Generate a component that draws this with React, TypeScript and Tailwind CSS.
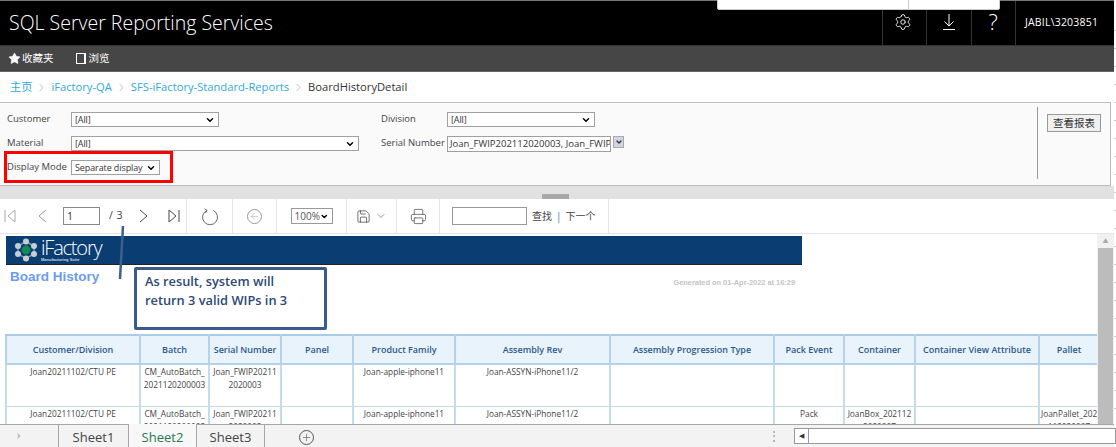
import { Settings, ChevronRight, Star, ChevronDown, ArrowLeft, Save, Printer, Plus } from 'lucide-react';

const sans = "font-['Open_Sans','Noto_Sans_CJK_SC',sans-serif]";

const columns = [
  { title: 'Customer/Division', width: 134 },
  { title: 'Batch', width: 69 },
  { title: 'Serial Number', width: 72 },
  { title: 'Panel', width: 72 },
  { title: 'Product Family', width: 102 },
  { title: 'Assembly Rev', width: 155 },
  { title: 'Assembly Progression Type', width: 164 },
  { title: 'Pack Event', width: 70 },
  { title: 'Container', width: 71 },
  { title: 'Container View Attribute', width: 124 },
  { title: 'Pallet', width: 60 },
];

const rows = [
  ['Joan20211102/CTU PE', 'CM_AutoBatch_ 2021120200003', 'Joan_FWIP20211 2020003', '', 'Joan-apple-iphone11', 'Joan-ASSYN-iPhone11/2', '', '', '', '', ''],
  ['Joan20211102/CTU PE', 'CM_AutoBatch_ 2021120200003', 'Joan_FWIP20211 2020003', '', 'Joan-apple-iphone11', 'Joan-ASSYN-iPhone11/2', '', 'Pack', 'JoanBox_202112 2020007', '', 'JoanPallet_202 112020007'],
];

function FakeSelect({ value, width }: { value: string; width: string }) {
  return (
    <div className={`${width} h-[15px] flex items-center justify-between bg-white border border-[#a0a0a0] pl-[3px] pr-[3px] text-[9px] tracking-[-0.1px] text-[#333] whitespace-nowrap`}>
      <span>{value}</span>
      <ChevronDown size={10} strokeWidth={3.5} className="text-black shrink-0" />
    </div>
  );
}

function Logo() {
  const dots = [[12, 3.5], [20, 8], [20, 16], [12, 20.5], [4, 16], [4, 8]];
  return (
    <svg width="24" height="24" viewBox="0 0 24 24">
      <polygon points="12,3.5 20,8 20,16 12,20.5 4,16 4,8" fill="none" stroke="#7f96ad" strokeWidth="1.5" />
      {dots.map(([x, y]) => <circle key={`${x}:${y}`} cx={x} cy={y} r="3" fill="#c6ced4" />)}
      <circle cx="12" cy="12" r="4.4" fill="#0f8a50" />
    </svg>
  );
}

function ToolDivider() {
  return <div className="w-px self-stretch bg-[#e6e6e6]" />;
}

export default function App() {
  return (
    <div className={`relative w-[1116px] h-[447px] overflow-hidden bg-white flex ${sans}`}>
      <div className="flex flex-col w-[1114px] h-full shrink-0">
        {/* Top bar */}
        <header className="h-[46px] shrink-0 bg-black border-t border-[#777] border-b-[#333] border-b flex items-stretch justify-between">
          <h1 className="pl-[9px] pt-[8px] text-[19.5px] leading-[28px] font-light text-white">SQL Server Reporting Services</h1>
          <div className="flex items-stretch text-white">
            <div className="w-[44.5px] border-l border-[#333] flex items-center justify-center pb-[3px] pr-[2px]"><Settings size={18} strokeWidth={1.2} /></div>
            <div className="w-[44.5px] border-l border-[#333] flex items-center justify-center pb-[3px]">
              <svg width="14" height="18" viewBox="0 0 14 18" fill="none" stroke="white" strokeWidth="1">
                <path d="M7 1v12M2.5 8.5 7 13l4.5-4.5M1 16.5h12" />
              </svg>
            </div>
            <div className="w-[44.5px] border-l border-[#333] flex items-center justify-center pb-[3px] text-[22px] font-light">?</div>
            <div className="w-[99px] border-l border-[#333] flex items-center pl-[9px] pb-[1px] text-[10.5px] tracking-[0.2px]">JABIL\3203851</div>
          </div>
        </header>

        {/* Nav bar */}
        <nav className="h-[26px] shrink-0 bg-[#464646] border-b border-[#666] flex items-center pl-[8px] text-[10.5px] text-white">
          <Star size={13} fill="white" strokeWidth={1} />
          <span className="ml-[1px]">收藏夹</span>
          <span className="ml-[22px] w-[10px] h-[11px] border border-white border-r-2" />
          <span className="ml-[3px]">浏览</span>
        </nav>

        {/* Breadcrumb */}
        <div className="h-[30px] shrink-0 flex items-center pl-[10px] text-[11.2px] text-[#30a9de]">
          <span>主页</span>
          <ChevronRight size={13} strokeWidth={1} className="mx-[3px] text-[#888]" />
          <span>iFactory-QA</span>
          <ChevronRight size={13} strokeWidth={1} className="mx-[3px] text-[#888]" />
          <span>SFS-iFactory-Standard-Reports</span>
          <ChevronRight size={13} strokeWidth={1} className="mx-[3px] text-[#888]" />
          <span className="text-[#333]">BoardHistoryDetail</span>
        </div>

        {/* Parameters */}
        <section className="h-[84px] w-[1111px] shrink-0 bg-[#fafafa] border border-l-0 border-[#bdbdbd] flex text-[9.5px] text-[#444]">
          <div className="w-[1037px] pl-[7px] pt-[9px] flex flex-col gap-[9px]">
            <div className="flex items-center h-[15px]">
              <span className="w-[64px]">Customer</span>
              <FakeSelect value="[All]" width="w-[148px]" />
              <span className="ml-[162px] w-[66px]">Division</span>
              <FakeSelect value="[All]" width="w-[148px]" />
            </div>
            <div className="flex items-center h-[15px]">
              <span className="w-[64px]">Material</span>
              <FakeSelect value="[All]" width="w-[288px]" />
              <span className="ml-[22px] w-[66px]">Serial Number</span>
              <div className="w-[164px] h-[16px] bg-white border border-[#a0a0a0] pl-[2px] whitespace-nowrap overflow-hidden text-[9.5px] text-[#333]">Joan_FWIP202112020003, Joan_FWIP202112020003</div>
              <div className="ml-[2px] -mt-[3px] w-[11px] h-[12px] bg-[#d0d4e4] border border-[#aaa] flex items-center justify-center"><ChevronDown size={8} strokeWidth={4} className="text-[#333]" /></div>
            </div>
            <div className="flex items-center h-[15px]">
              <span className="w-[64px]">Display Mode</span>
              <FakeSelect value="Separate display" width="w-[89px]" />
            </div>
          </div>
          <div className="w-px h-[72px] mt-[4px] bg-[#999]" />
          <div className="pl-[9px] pt-[11px]">
            <button className="h-[18px] px-[5px] bg-[#f0f0f0] border border-[#999] text-[10.5px] leading-none text-[#333]">查看报表</button>
          </div>
        </section>

        {/* Splitter */}
        <div className="h-[13px] shrink-0 bg-[#e1e1e1] flex justify-center pr-[4px] pt-[8px]">
          <div className="w-[27px] h-[5px] bg-[#a8a8a8]" />
        </div>

        {/* Toolbar */}
        <div className="h-[35px] shrink-0 border-b border-[#e6e6e6] flex items-stretch text-[#444]">
          <div className="w-[186px] flex items-center pl-[4px]">
            <svg width="12" height="14" viewBox="0 0 12 14" fill="none" stroke="#aaa"><path d="M1 1v12M11 1 4 7l7 6z" /></svg>
            <svg className="ml-[21px]" width="10" height="14" viewBox="0 0 10 14" fill="none" stroke="#999"><path d="M9 1 2 7l7 6" /></svg>
            <span className="ml-[16px] w-[37px] h-[18px] border border-[#888] text-[10.5px] leading-[16px] pl-[3px] text-[#331a66]">1</span>
            <span className="ml-[9px] text-[10.5px] tracking-[0.5px]">/ 3</span>
            <svg className="ml-[16px]" width="10" height="14" viewBox="0 0 10 14" fill="none" stroke="#444"><path d="M1 1l7 6-7 6" /></svg>
            <svg className="ml-[19px]" width="12" height="14" viewBox="0 0 12 14" fill="none" stroke="#444"><path d="M11 1v12M1 1l7 6-7 6z" /></svg>
          </div>
          <ToolDivider />
          <div className="w-[45px] flex items-center justify-center">
            <svg width="18" height="19" viewBox="0 0 18 19" fill="none" stroke="#555" strokeWidth="0.9">
              <path d="M5.5 3.6A7.5 7.5 0 1 0 12.2 3.4M3.5 1.8l2.6 1.6-1.6 2.6" />
            </svg>
          </div>
          <ToolDivider />
          <div className="w-[43px] flex items-center justify-center">
            <span className="w-[15px] h-[15px] rounded-full border border-[#999] flex items-center justify-center"><ArrowLeft size={11} strokeWidth={1} className="text-[#999]" /></span>
          </div>
          <ToolDivider />
          <div className="w-[69px] flex items-center justify-center">
            <div className="w-[42px] h-[16px] border border-[#999] flex items-center justify-between px-[3px] text-[10px] text-[#555]">100%<ChevronDown size={9} strokeWidth={4} className="text-black" /></div>
          </div>
          <ToolDivider />
          <div className="w-[49px] flex items-center justify-center gap-[4px]"><Save size={15} strokeWidth={1.1} className="text-[#333]" /><ChevronDown size={12} strokeWidth={1} className="text-[#333]" /></div>
          <ToolDivider />
          <div className="w-[42px] flex items-center justify-center"><Printer size={17} strokeWidth={1} className="text-[#444]" /></div>
          <ToolDivider />
          <div className="w-[168px] flex items-center pl-[12px] text-[10px]">
            <span className="w-[75px] h-[18px] border border-[#999]" />
            <span className="ml-[5px]">查找</span>
            <span className="mx-[4px] text-[#2b7cb3]">|</span>
            <span>下一个</span>
          </div>
          <ToolDivider />
        </div>

        {/* Report viewport */}
        <div className="relative flex-1 min-h-0 flex">
          <div className="flex-1 min-w-0 overflow-hidden pl-[6px] pt-[2px] font-['Liberation_Sans',sans-serif]">
            <div className="w-[796px] h-[29px] bg-[#0a3e73] border-b border-[#222] flex items-center pl-[8px] text-white">
              <Logo />
              <div className="ml-[3px] flex flex-col leading-none">
                <span className={`text-[20px] leading-[19px] tracking-[-1.2px] font-light ${sans}`}>iFactory</span>
                <span className="text-[4px] leading-[5px] font-bold text-[#cfd8e2]">Manufacturing Suite</span>
              </div>
            </div>
            <div className="w-[796px] h-[69px] flex justify-between items-start">
              <span className="ml-[4px] mt-[2px] text-[13.5px] font-bold text-[#6b9cf0]">Board History</span>
              <span className="mt-[12px] mr-[7px] text-[7.4px] font-bold text-[#c4c4c4]">Generated on 01-Apr-2022 at 16:29</span>
            </div>
            <table className={`table-fixed border-collapse -ml-px ${sans} w-[1093px]`}>
              <colgroup>
                {columns.map((c) => <col key={c.title} style={{ width: c.width }} />)}
              </colgroup>
              <thead>
                <tr className="h-[29px] bg-[#e8f3fc]">
                  {columns.map((c) => (
                    <th key={c.title} className="border-2 border-[#b5d2e8] border-t-[#a9cbe4] text-[9px] font-semibold text-[#2d5a86] text-center whitespace-nowrap overflow-hidden">{c.title}</th>
                  ))}
                </tr>
              </thead>
              <tbody>
                {rows.map((row, i) => (
                  <tr key={i} className="h-[42px]">
                    {row.map((cell, j) => (
                      <td key={j} className="border border-[#c5dcee] border-x-2 align-top text-center text-[8.3px] leading-[13px] text-[#444] px-[1px] overflow-hidden">{cell}</td>
                    ))}
                  </tr>
                ))}
              </tbody>
            </table>
          </div>
          {/* Vertical scrollbar */}
          <div className="w-[17px] shrink-0 flex flex-col bg-[#f1f1f1]">
            <div className="h-[14px] flex items-center justify-center text-[6px] text-[#aaa]">▲</div>
            <div className="flex-1 mx-[1px] bg-[#bcbcbc]" />
          </div>
        </div>

        {/* Sheet tabs */}
        <div className="h-[23px] shrink-0 bg-[#f3f3f3] border-t border-[#a6a6a6] flex items-stretch font-['Open_Sans',sans-serif] text-[13px] text-[#444]">
          <div className="w-[59px] border-r border-[#a6a6a6] flex items-center pl-[14px] text-[#bbb]"><ChevronRight size={10} fill="#bbb" /></div>
          <div className="w-[70px] border-r border-[#a6a6a6] flex items-center justify-center pt-[3px]">Sheet1</div>
          <div className="w-[68px] -mt-px bg-[#f8f8f8] border-r border-[#a6a6a6] flex items-center justify-center pt-[4px] text-[#1f7a4f]">Sheet2</div>
          <div className="w-[68px] border-r border-[#a6a6a6] flex items-center justify-center pt-[3px]">Sheet3</div>
          <div className="ml-[34px] flex items-center pt-[3px]"><span className="w-[15px] h-[15px] rounded-full border border-[#555] flex items-center justify-center"><Plus size={11} strokeWidth={1.2} /></span></div>
          <div className="ml-auto flex items-center text-[#999] text-[12px] mr-[14px]">⋮</div>
          <div className="w-[322px] -mr-[2px] h-[16px] self-center bg-white border border-[#999] flex"><span className="w-[14px] border-r border-[#999] flex items-center justify-center text-[7px] text-[#333]">◀</span></div>
        </div>
      </div>

      {/* Sheet gridline ticks along the right edge */}
      <div className="w-[2px] h-[410px] mt-[13px] shrink-0 bg-[repeating-linear-gradient(to_bottom,transparent_0,transparent_17px,#cccccc_17px,#cccccc_18px)]" />

      {/* Annotations on top of the screenshot */}
      <div className="absolute left-[717px] -top-[2px] w-[283px] h-[12px] bg-white border border-[#ccc] rounded-b-[2px] flex pl-[190px]"><span className="w-px h-full bg-[#ccc]" /></div>
      <div className="absolute left-[4px] top-[151px] w-[169px] h-[32px] border-[3px] border-[#ff0000]" />
      <svg className="absolute left-[115px] top-[226px]" width="12" height="56" viewBox="0 0 12 56">
        <line x1="8" y1="0" x2="5" y2="53" stroke="#3c5f8f" strokeWidth="2.5" />
      </svg>
      <div className="absolute left-[134px] top-[267px] w-[193px] h-[63px] bg-white border-[3px] border-[#3b5b8c] rounded-[2px] pl-[8px] pt-[2px] text-[12.8px] leading-[19px] font-semibold text-[#2c4a75]">
        As result, system will<br />return 3 valid WIPs in 3
      </div>
    </div>
  );
}
